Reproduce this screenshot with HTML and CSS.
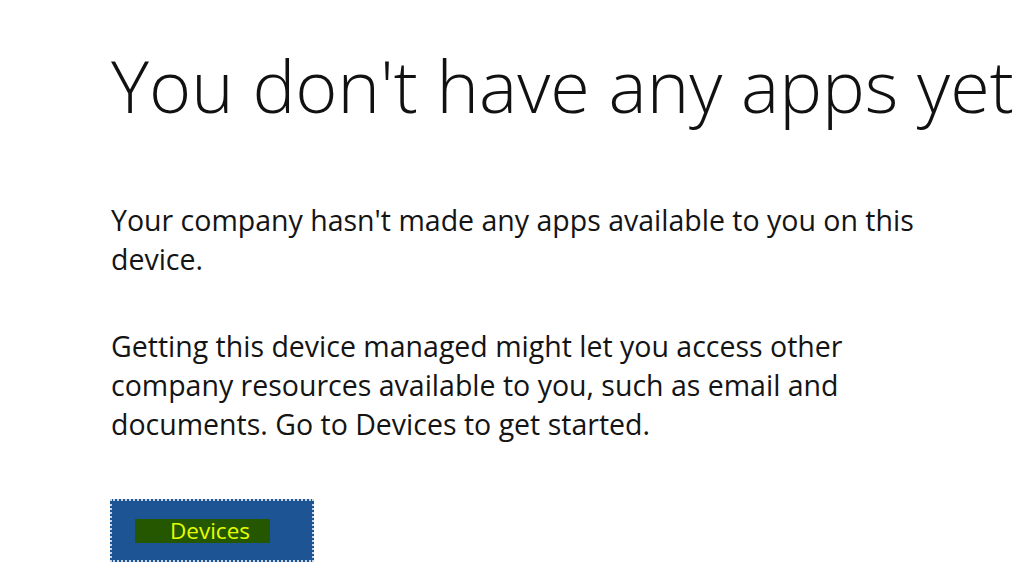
FILE: index.html
```html
<!DOCTYPE html>
<html lang="en">
<head>
<meta charset="utf-8">
<title>Apps</title>
<link rel="stylesheet" href="styles.css">
</head>
<body>
<main class="page">
  <h1 class="title">You don't have any apps yet</h1>
  <p class="msg">Your company hasn't made any apps available to you on this device.</p>
  <p class="msg msg-second">Getting this device managed might let you access other company resources available to you, such as email and documents. Go to Devices to get started.</p>
  <button class="btn" type="button"><span class="btn-label">Devices</span></button>
</main>
</body>
</html>
```

FILE: styles.css
```css
html, body {
  margin: 0;
  padding: 0;
  background: #ffffff;
}

.page {
  padding: 37px 0 0 111px;
  display: flex;
  flex-direction: column;
  align-items: flex-start;
  font-family: "Open Sans", "Noto Sans", "Liberation Sans", sans-serif;
  color: #141414;
}

.title {
  margin: 0;
  font-size: 72px;
  font-weight: 300;
  line-height: 96px;
  color: #111111;
  white-space: nowrap;
}

.msg {
  margin: 0;
  width: 820px;
  font-size: 28.5px;
  line-height: 39px;
  font-weight: 400;
}

.title + .msg {
  margin-top: 68px;
}

.msg-second {
  margin-top: 48px;
}

.btn {
  margin-top: 55px;
  margin-left: -1px;
  width: 204px;
  height: 63px;
  padding: 0 0 0 23px;
  background: #1d5493;
  border: 2px dotted #c9d6e3;
  display: flex;
  align-items: center;
  justify-content: flex-start;
  cursor: pointer;
}

.btn-label {
  display: block;
  width: 135px;
  height: 24px;
  background: #245700;
  color: #e4ff00;
  font-family: "Open Sans", "Noto Sans", sans-serif;
  font-size: 22.5px;
  line-height: 24px;
  text-align: center;
  padding-left: 15px;
  box-sizing: border-box;
}
```
